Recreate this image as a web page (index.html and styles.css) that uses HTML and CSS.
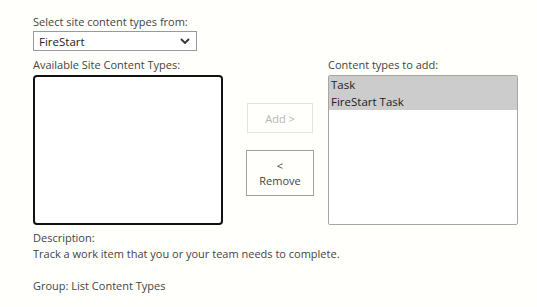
FILE: index.html
```html
<!DOCTYPE html>
<html lang="en">
<head>
<meta charset="UTF-8">
<title>Add Content Types</title>
<link rel="stylesheet" href="styles.css">
</head>
<body>
<div class="page">
<div class="label">Select site content types from:</div>
<div class="dropdown">
<span>FireStart</span>
<svg class="chevron" width="10" height="6" viewBox="0 0 10 6"><path d="M1 1 L5 5 L9 1" fill="none" stroke="#333" stroke-width="1.8"/></svg>
</div>

<div class="picker">
<div class="column">
<div class="label">Available Site Content Types:</div>
<div class="listbox listbox-focus"></div>
</div>

<div class="buttons">
<button class="btn btn-add" disabled>Add &gt;</button>
<button class="btn btn-remove">&lt;<br>Remove</button>
</div>

<div class="column">
<div class="label">Content types to add:</div>
<div class="listbox">
<div class="item selected">Task</div>
<div class="item selected">FireStart Task</div>
</div>
</div>
</div>

<div class="details">
<div>Description:</div>
<div>Track a work item that you or your team needs to complete.</div>
<div class="group">Group: List Content Types</div>
</div>
</div>
</body>
</html>
```

FILE: styles.css
```css
body {
margin: 0;
background: #fffffc;
font-family: 'Open Sans', 'Noto Sans', sans-serif;
font-size: 11px;
color: #444;
}
.page {
padding: 14px 0 0 33px;
}
.label {
line-height: 16px;
}
.dropdown {
box-sizing: border-box;
width: 164px;
height: 20px;
border: 1px solid #999;
background: #fff;
color: #222;
font-size: 11.5px;
display: flex;
align-items: center;
justify-content: space-between;
padding: 0 6px 0 5px;
margin: 1px 0 6px;
}
.chevron {
display: block;
}
.picker {
display: flex;
}
.column {
display: flex;
flex-direction: column;
}
.column .label {
margin-bottom: 2px;
}
.listbox {
box-sizing: border-box;
width: 190px;
height: 150px;
border: 1px solid #a6a6a6;
border-radius: 2px;
background: #fff;
color: #222;
font-size: 11.5px;
}
.listbox-focus {
border: 2px solid #111;
border-radius: 4px;
}
.item {
line-height: 17px;
padding-left: 2px;
}
.item.selected {
background: #cccccc;
}
.buttons {
width: 68px;
margin: 46px 14px 0 23px;
display: flex;
flex-direction: column;
align-items: center;
gap: 17px;
}
.btn {
font-family: inherit;
font-size: 11px;
background: #fffffc;
color: #444;
border: 1px solid #a0a0a0;
padding: 0;
line-height: 15px;
}
.btn-add {
width: 66px;
height: 30px;
border-color: #e2e2e2;
color: #b5b5b5;
}
.btn-remove {
width: 68px;
height: 46px;
}
.details {
margin-top: 5px;
line-height: 16px;
}
.group {
margin-top: 16px;
}
```
